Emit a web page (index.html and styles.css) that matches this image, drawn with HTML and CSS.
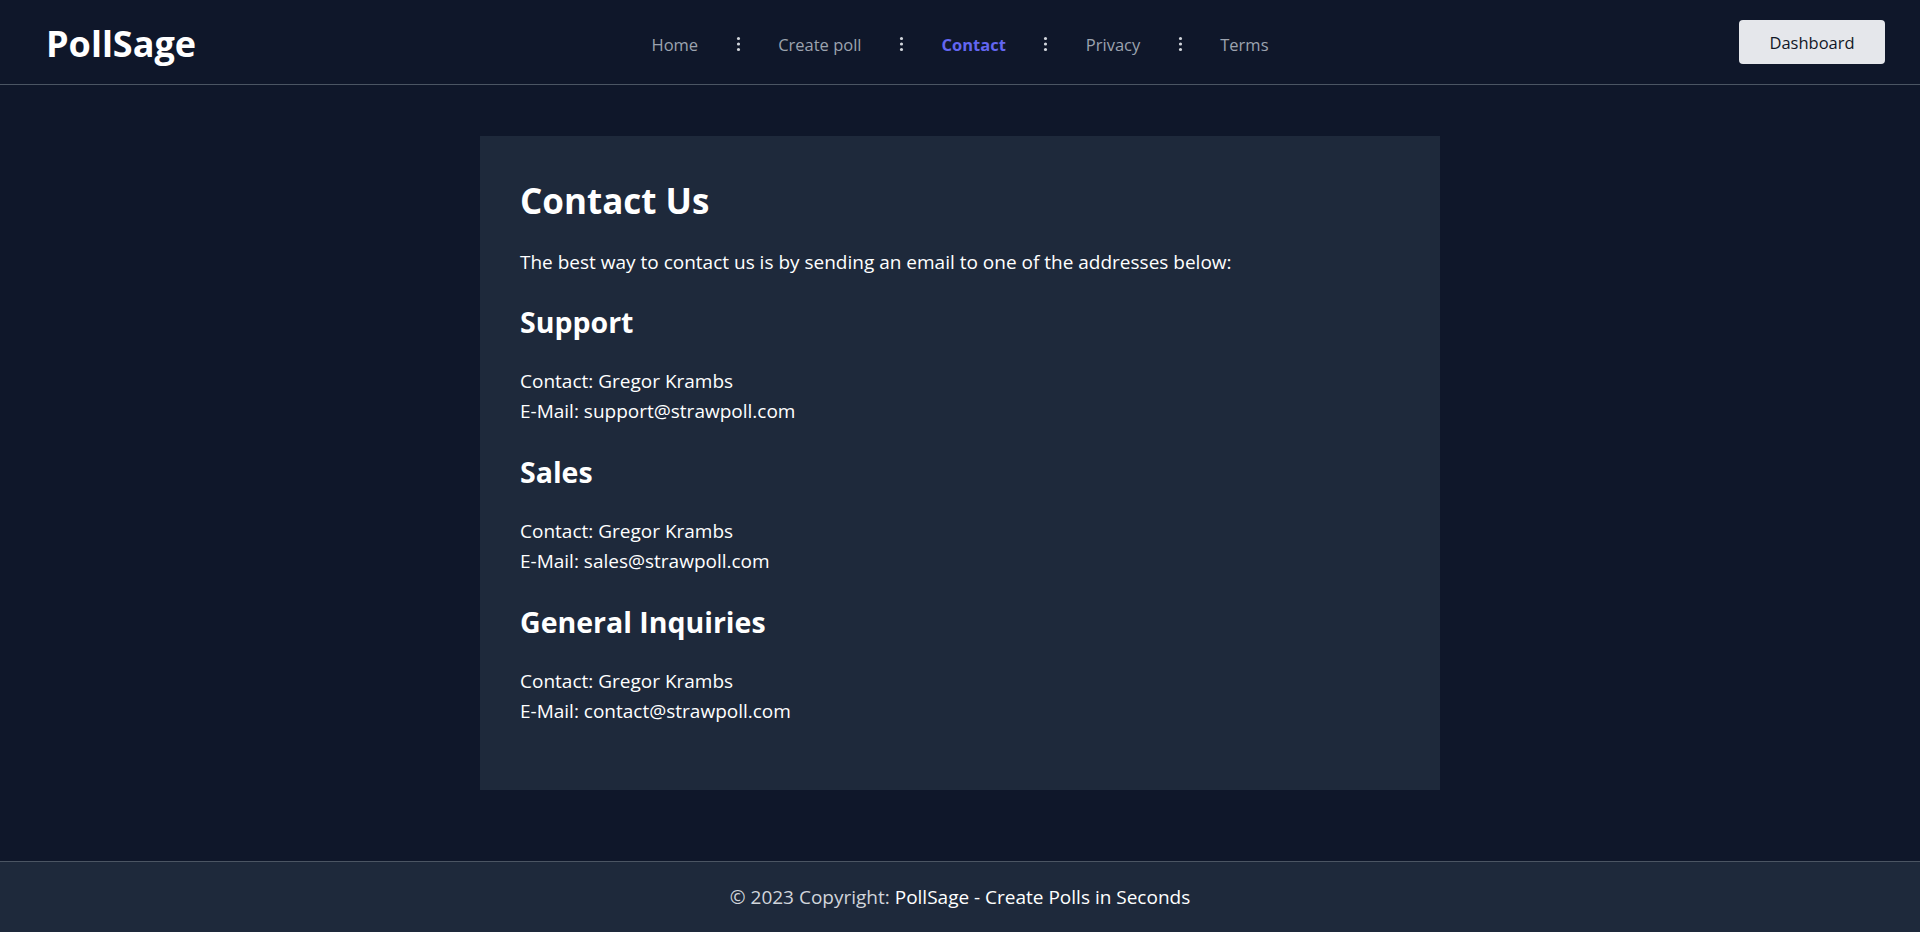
FILE: index.html
```html
<!DOCTYPE html>
<html lang="en">
<head>
<meta charset="utf-8">
<title>PollSage - Contact</title>
<link rel="stylesheet" href="styles.css">
</head>
<body>
<header class="site-header">
  <a class="logo" href="#">PollSage</a>
  <nav class="main-nav">
    <a class="nav-link" href="#">Home</a>
    <span class="nav-sep"><svg width="4" height="16" viewBox="0 0 4 16"><circle cx="2" cy="2.5" r="1.6"/><circle cx="2" cy="8" r="1.6"/><circle cx="2" cy="13.5" r="1.6"/></svg></span>
    <a class="nav-link" href="#">Create poll</a>
    <span class="nav-sep"><svg width="4" height="16" viewBox="0 0 4 16"><circle cx="2" cy="2.5" r="1.6"/><circle cx="2" cy="8" r="1.6"/><circle cx="2" cy="13.5" r="1.6"/></svg></span>
    <a class="nav-link active" href="#">Contact</a>
    <span class="nav-sep"><svg width="4" height="16" viewBox="0 0 4 16"><circle cx="2" cy="2.5" r="1.6"/><circle cx="2" cy="8" r="1.6"/><circle cx="2" cy="13.5" r="1.6"/></svg></span>
    <a class="nav-link" href="#">Privacy</a>
    <span class="nav-sep"><svg width="4" height="16" viewBox="0 0 4 16"><circle cx="2" cy="2.5" r="1.6"/><circle cx="2" cy="8" r="1.6"/><circle cx="2" cy="13.5" r="1.6"/></svg></span>
    <a class="nav-link" href="#">Terms</a>
  </nav>
  <a class="dash-btn" href="#">Dashboard</a>
</header>
<main class="page">
  <section class="card">
    <h1 class="title">Contact Us</h1>
    <p class="intro">The best way to contact us is by sending an email to one of the addresses below:</p>
    <h2 class="section-title">Support</h2>
    <p class="info">Contact: Gregor Krambs<br>E-Mail: support@strawpoll.com</p>
    <h2 class="section-title">Sales</h2>
    <p class="info">Contact: Gregor Krambs<br>E-Mail: sales@strawpoll.com</p>
    <h2 class="section-title">General Inquiries</h2>
    <p class="info">Contact: Gregor Krambs<br>E-Mail: contact@strawpoll.com</p>
  </section>
</main>
<footer class="site-footer">
  <span class="copy">© 2023 Copyright:</span>&nbsp;<a class="footer-link" href="#">PollSage - Create Polls in Seconds</a>
</footer>
</body>
</html>
```
FILE: styles.css
```css
* { box-sizing: border-box; }
html, body { margin: 0; padding: 0; }
body {
  min-height: 100vh;
  display: flex;
  flex-direction: column;
  background: #0f172a;
  color: #ffffff;
  font-family: "Segoe UI", "Open Sans", "Noto Sans", sans-serif;
}
a { text-decoration: none; color: inherit; }

.site-header {
  height: 85px;
  border-bottom: 1px solid #4b5563;
  display: flex;
  align-items: center;
  justify-content: space-between;
  padding: 0 35px 0 46px;
  position: relative;
}
.logo {
  font-size: 36px;
  font-weight: 700;
  color: #ffffff;
  margin-top: 3px;
}
.main-nav {
  position: absolute;
  left: 50%;
  top: 2px;
  height: 84px;
  transform: translateX(-50%);
  display: flex;
  align-items: center;
  gap: 38px;
}
.nav-link {
  font-size: 16.5px;
  color: #9ca3af;
}
.nav-link.active {
  color: #6366f1;
  font-weight: 700;
}
.nav-sep { display: flex; align-items: center; height: 16px; }
.nav-sep svg { fill: #d1d5db; }
.dash-btn {
  width: 146px;
  height: 44px;
  display: flex;
  align-items: center;
  justify-content: center;
  background: #e5e7eb;
  color: #111827;
  border-radius: 4px;
  font-size: 16.5px;
}

.page {
  flex: 1;
  display: flex;
  justify-content: center;
  align-items: flex-start;
  padding: 51px 0 71px;
}
.card {
  width: 960px;
  background: #1e293b;
  padding: 43px 40px 36px;
}
.title {
  font-size: 35px;
  line-height: 44px;
  font-weight: 700;
  margin: 0 0 24px;
}
.intro {
  font-size: 19px;
  line-height: 30px;
  margin: 0 0 27px;
}
.section-title {
  font-size: 28.5px;
  line-height: 36px;
  font-weight: 700;
  margin: 0 0 26px;
}
.info {
  font-size: 19px;
  line-height: 30px;
  margin: 0 0 28px;
}

.site-footer {
  height: 71px;
  border-top: 1px solid #4b5563;
  background: #1e293b;
  display: flex;
  align-items: center;
  justify-content: center;
  font-size: 19px;
}
.copy { color: #d1d5db; }
.footer-link { color: #ffffff; }
```
